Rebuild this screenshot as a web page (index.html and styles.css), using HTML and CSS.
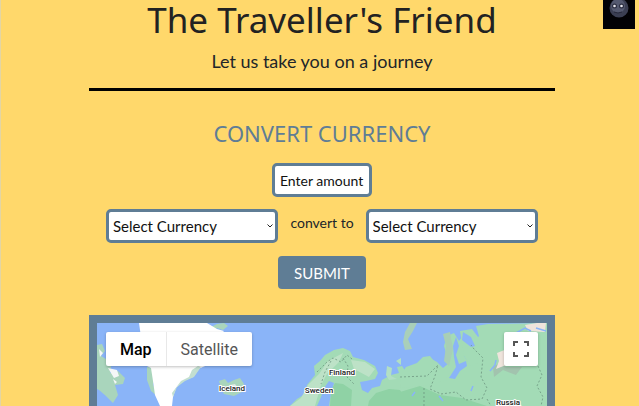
FILE: index.html
```html
<!DOCTYPE html>
<html lang="en">
<head>
<meta charset="utf-8">
<meta name="viewport" content="width=device-width, initial-scale=1">
<title>The Traveller's Friend</title>
<link rel="stylesheet" href="styles.css">
</head>
<body>
<svg class="moon" viewBox="0 0 32 29" aria-hidden="true">
  <rect width="32" height="29" fill="#020205"/>
  <circle cx="16" cy="8" r="9.500" fill="#3b3f53"/>
  <circle cx="15" cy="6" r="7" fill="#555a70"/>
  <circle cx="11.500" cy="6" r="2.500" fill="#2b2e40"/>
  <circle cx="18.500" cy="6" r="2.500" fill="#2b2e40"/>
  <circle cx="11.500" cy="6" r="1.300" fill="#e8e8ee"/>
  <circle cx="18.500" cy="6" r="1.300" fill="#e8e8ee"/>
  <path d="M11 12q4 2 8 0" fill="none" stroke="#25283a"/>
</svg>
<main class="page">
  <header class="intro">
    <h1 class="title">The Traveller's Friend</h1>
    <p class="tagline">Let us take you on a journey</p>
  </header>
  <form class="converter">
    <h2 class="heading">CONVERT CURRENCY</h2>
    <input class="field amount" type="text" placeholder="Enter amount" aria-label="Enter amount">
    <div class="currencies">
      <div class="picker">
        <select class="field" aria-label="Convert from"><option>Select Currency</option></select>
        <svg class="chevron" viewBox="0 0 6 4" aria-hidden="true"><path d="M.5.5 3 3 5.500.5"/></svg>
      </div>
      <span class="between">convert to</span>
      <div class="picker">
        <select class="field" aria-label="Convert into"><option>Select Currency</option></select>
        <svg class="chevron" viewBox="0 0 6 4" aria-hidden="true"><path d="M.5.5 3 3 5.500.5"/></svg>
      </div>
    </div>
    <button class="submit" type="button">SUBMIT</button>
  </form>
  <section class="map" aria-label="Map">
    <svg class="terrain" viewBox="0 0 450 83" preserveAspectRatio="xMidYMin slice">
      <rect width="450" height="83" fill="#8ab4f8"/>
      <g fill="#a9d5bc">
        <path d="M0 22 5 21 8 28 4 33 9 36 14 43 13 50 21 48 28 55 26 61 18 62 21 72 16 80 9 73 2 67 0 66Z"/>
        <path d="M50 44 57 45 59 54 56 61 60 73 54 68 50 57Z"/>
        <path d="M122 58 128 56 131 60 137 57 143 55 147 61 145 69 137 73 127 71 124 65Z"/>
        <path d="M114 4 120 1 127 0 131 3 126 7 120 5 116 9Z"/>
      </g>
      <path d="M11 45 20 47 22 53 17 55ZM2 26 6 30 3 34ZM16 56 20 59 18 61Z" fill="#f4f7f7"/>
      <path d="M42 0 110 0 120 6 127 8 121 15 123 32 113 41 101 46 96 54 86 58 79 65 76 74 75 83 63 83 58 72 56 58 54 45 50 43 48 28 44 14Z" fill="#fff"/>
      <path d="M84 58 92 54 95 47 101 43 104 44 97 54 88 58 80 64 76 74 75 70Z" fill="#c3dfd0"/>
      <path d="M133 62 138 61 141 65 135 67Z" fill="#e2ebe5"/>

      <!-- Scandinavia and northern Russia -->
      <path d="M193 83 200 76 208 71 210 62 218 52 217 43 223 38 228 32 237 27 246 25 253 28 256 34 267 37 278 43 281 50 278 56 269 58 263 59 265 67 271 70 275 65 283 63 285 57 294 52 302 50 300 44 305 43 309 49 317 53 323 48 328 38 333 35 340 39 346 45 352 40 347 23 350 13 357 10 362 18 365 14 371 25 367 33 373 42 381 39 376 20 382 13 379 3 391 1 450 0 450 83Z" fill="#a3dbb6"/>
      <path d="M303 53 309 44 320 40 326 34 333 33 340 42 346 48 351 57 330 62 304 65Z" fill="#a3dbb6"/>
      <path d="M193 83 204 75 211 62 222 51 231 38 246 30 242 39 230 51 224 62 218 83ZM254 37 268 39 278 46 272 54 257 46Z" fill="#bde2c7"/>
      <path d="M363 8 375 6 381 14 381 40 373 43 367 33Z" fill="#a3dbb6"/>
      <path d="M238 60 246 61 255 67 254 83 233 83 234 68ZM272 78 279 70 292 66 303 67 309 76 321 83 271 83ZM303 69 323 63 343 72 365 75 390 83 303 83Z" fill="#8fd2a5"/>
      <path d="M237 60 232 58 227 65 224 74 220 83 232 83 234 70Z" fill="#8ab4f8"/>
      <path d="M313 0 320 0 316 8 311 16 315 26 308 27 306 19 308 9Z" fill="#a9cfb9"/>
      <path d="M290 43 295 45 294 53 300 56 292 57 289 52ZM299 38 304 35 304 42Z" fill="#b2dfc3"/>
      <path d="M366 9 374 14 378 23 374 24 365 17Z" fill="#8ab4f8"/>
      <path d="M359 14 362 23 359 32 362 41 369 38 370 43 363 48 358 56 352 55 359 44 357 34 356 23Z" fill="#8ab4f8"/>
      <path d="M346 11 353 9 356 26 352 43 347 38 349 23Z" fill="#a8cfb5"/>
      <path d="M396 44 404 39 409 44 425 44 419 52 406 47 397 54Z" fill="#a2c3ae"/>
      <path d="M400 30 410 26 409 42 399 46 402 38ZM428 2 440 0 449 0 448 9 431 8Z" fill="#efe4dc"/>
      <g fill="none" stroke="#8ab4f8" stroke-width="1.500">
        <path d="M393 48 398 42 399 37M419 10 428 5 434 8M439 5 449 8M342 73 346 78M315 73 318 69M376 63 374 68"/>
      </g>
      <g fill="none" stroke="#6d9580" stroke-width=".8" stroke-dasharray="2 2">
        <path d="M220 49 230 39 236 35 244 39 250 32 255 36M246 35 251 43 250 54 257 61M303 54 330 53 336 47 341 42 338 53 333 66 344 71 359 69 369 77 385 76 390 65 384 54 386 35 377 26 374 22M327 83 327 65M441 43 445 52 440 63 446 74 444 83M390 76 394 83M234 38 228 49 224 61"/>
      </g>
      <g class="place">
        <text x="135" y="68">Iceland</text>
        <text x="245" y="52">Finland</text>
        <text x="222" y="70">Sweden</text>
        <text x="411" y="82">Russia</text>
      </g>
    </svg>
    <div class="controls">
      <div class="views">
        <button class="view active" type="button">Map</button>
        <button class="view" type="button">Satellite</button>
      </div>
      <button class="expand" type="button" aria-label="Toggle fullscreen view">
        <svg viewBox="0 0 16 16" aria-hidden="true"><path d="M1 5V1h4M11 1h4v4M15 11v4h-4M5 15H1v-4"/></svg>
      </button>
    </div>
  </section>
</main>
</body>
</html>
```
FILE: styles.css
```css
* {
  box-sizing: border-box;
}

body {
  margin: 0;
  padding-left: 4px;
  border-left: 1px solid #e3d5a4;
  background: #ffd86b;
  color: #212529;
  font-family: Lato, "Liberation Sans", sans-serif;
}

button,
input,
select {
  font: inherit;
}

.moon {
  position: absolute;
  top: 0;
  right: 4px;
  width: 32px;
  height: 29px;
}

.page {
  display: flex;
  flex-direction: column;
  width: 73.5%;
  min-height: 100vh;
  margin: 0 auto;
}

.intro {
  padding-bottom: 14px;
  border-bottom: 3px solid #000;
  text-align: center;
}

.title,
.heading {
  font-family: "Noto Sans", sans-serif;
  font-weight: 400;
}

.title {
  margin: 0;
  font-size: 35px;
  line-height: 40px;
  color: #222;
}

.tagline {
  margin: 8px 0 0;
  font-size: 18px;
  line-height: 26px;
}

.converter {
  display: flex;
  flex-direction: column;
  align-items: center;
  padding: 28px 0 26px;
}

.heading {
  margin: 0 0 16px;
  font-size: 22px;
  line-height: 28px;
  color: #5f7d95;
}

.field {
  height: 34px;
  padding: 0 5px;
  border: 3px solid #5f7d95;
  border-radius: 5px;
  background: #fff;
  color: #111;
  font-size: 15px;
}

.amount {
  width: 100px;
  font-size: 14px;
}

.amount::placeholder {
  color: #111;
  opacity: 1;
}

.currencies {
  display: flex;
  justify-content: center;
  gap: 12px;
  width: 100%;
  margin: 12px 0 13px;
}

.picker {
  position: relative;
  width: 37%;
}

.picker .field {
  width: 100%;
  padding: 0 4px;
  appearance: none;
}

.chevron {
  position: absolute;
  top: 15px;
  right: 5px;
  width: 6px;
  height: 4px;
  overflow: visible;
  fill: none;
  stroke: #222;
  pointer-events: none;
}

.between {
  font-size: 14px;
  line-height: 28px;
  white-space: nowrap;
}

.submit {
  height: 33px;
  padding: 0 16px;
  border: 0;
  border-radius: 4px;
  background: #5f7d95;
  color: #fff;
  font-size: 15px;
}

.map {
  position: relative;
  flex: 1;
  border: 8px solid #5f7d95;
  border-bottom: 0;
  overflow: hidden;
}

.terrain {
  position: absolute;
  width: 100%;
  height: 100%;
}

.place {
  fill: #222;
  stroke: #fff;
  stroke-width: 2px;
  paint-order: stroke;
  font: 500 8px Roboto, sans-serif;
  text-anchor: middle;
}

.controls {
  position: relative;
  display: flex;
  justify-content: space-between;
  padding: 9px;
  font-family: Roboto, sans-serif;
}

.views {
  display: flex;
  background: #fff;
  border-radius: 2px;
  box-shadow: 0 1px 3px rgb(0 0 0 / 25%);
}

.view {
  height: 34px;
  padding: 0 14px;
  border: 0;
  background: none;
  color: #555;
  font-size: 16px;
}

.view + .view {
  border-left: 1px solid #e8e8e8;
}

.active {
  color: #000;
  font-weight: 500;
}

.expand {
  display: grid;
  place-items: center;
  width: 34px;
  height: 34px;
  padding: 0;
  border: 0;
  border-radius: 2px;
  background: #fff;
  box-shadow: 0 1px 3px rgb(0 0 0 / 25%);
}

.expand svg {
  width: 16px;
  height: 16px;
  fill: none;
  stroke: #555;
  stroke-width: 2;
}
```
